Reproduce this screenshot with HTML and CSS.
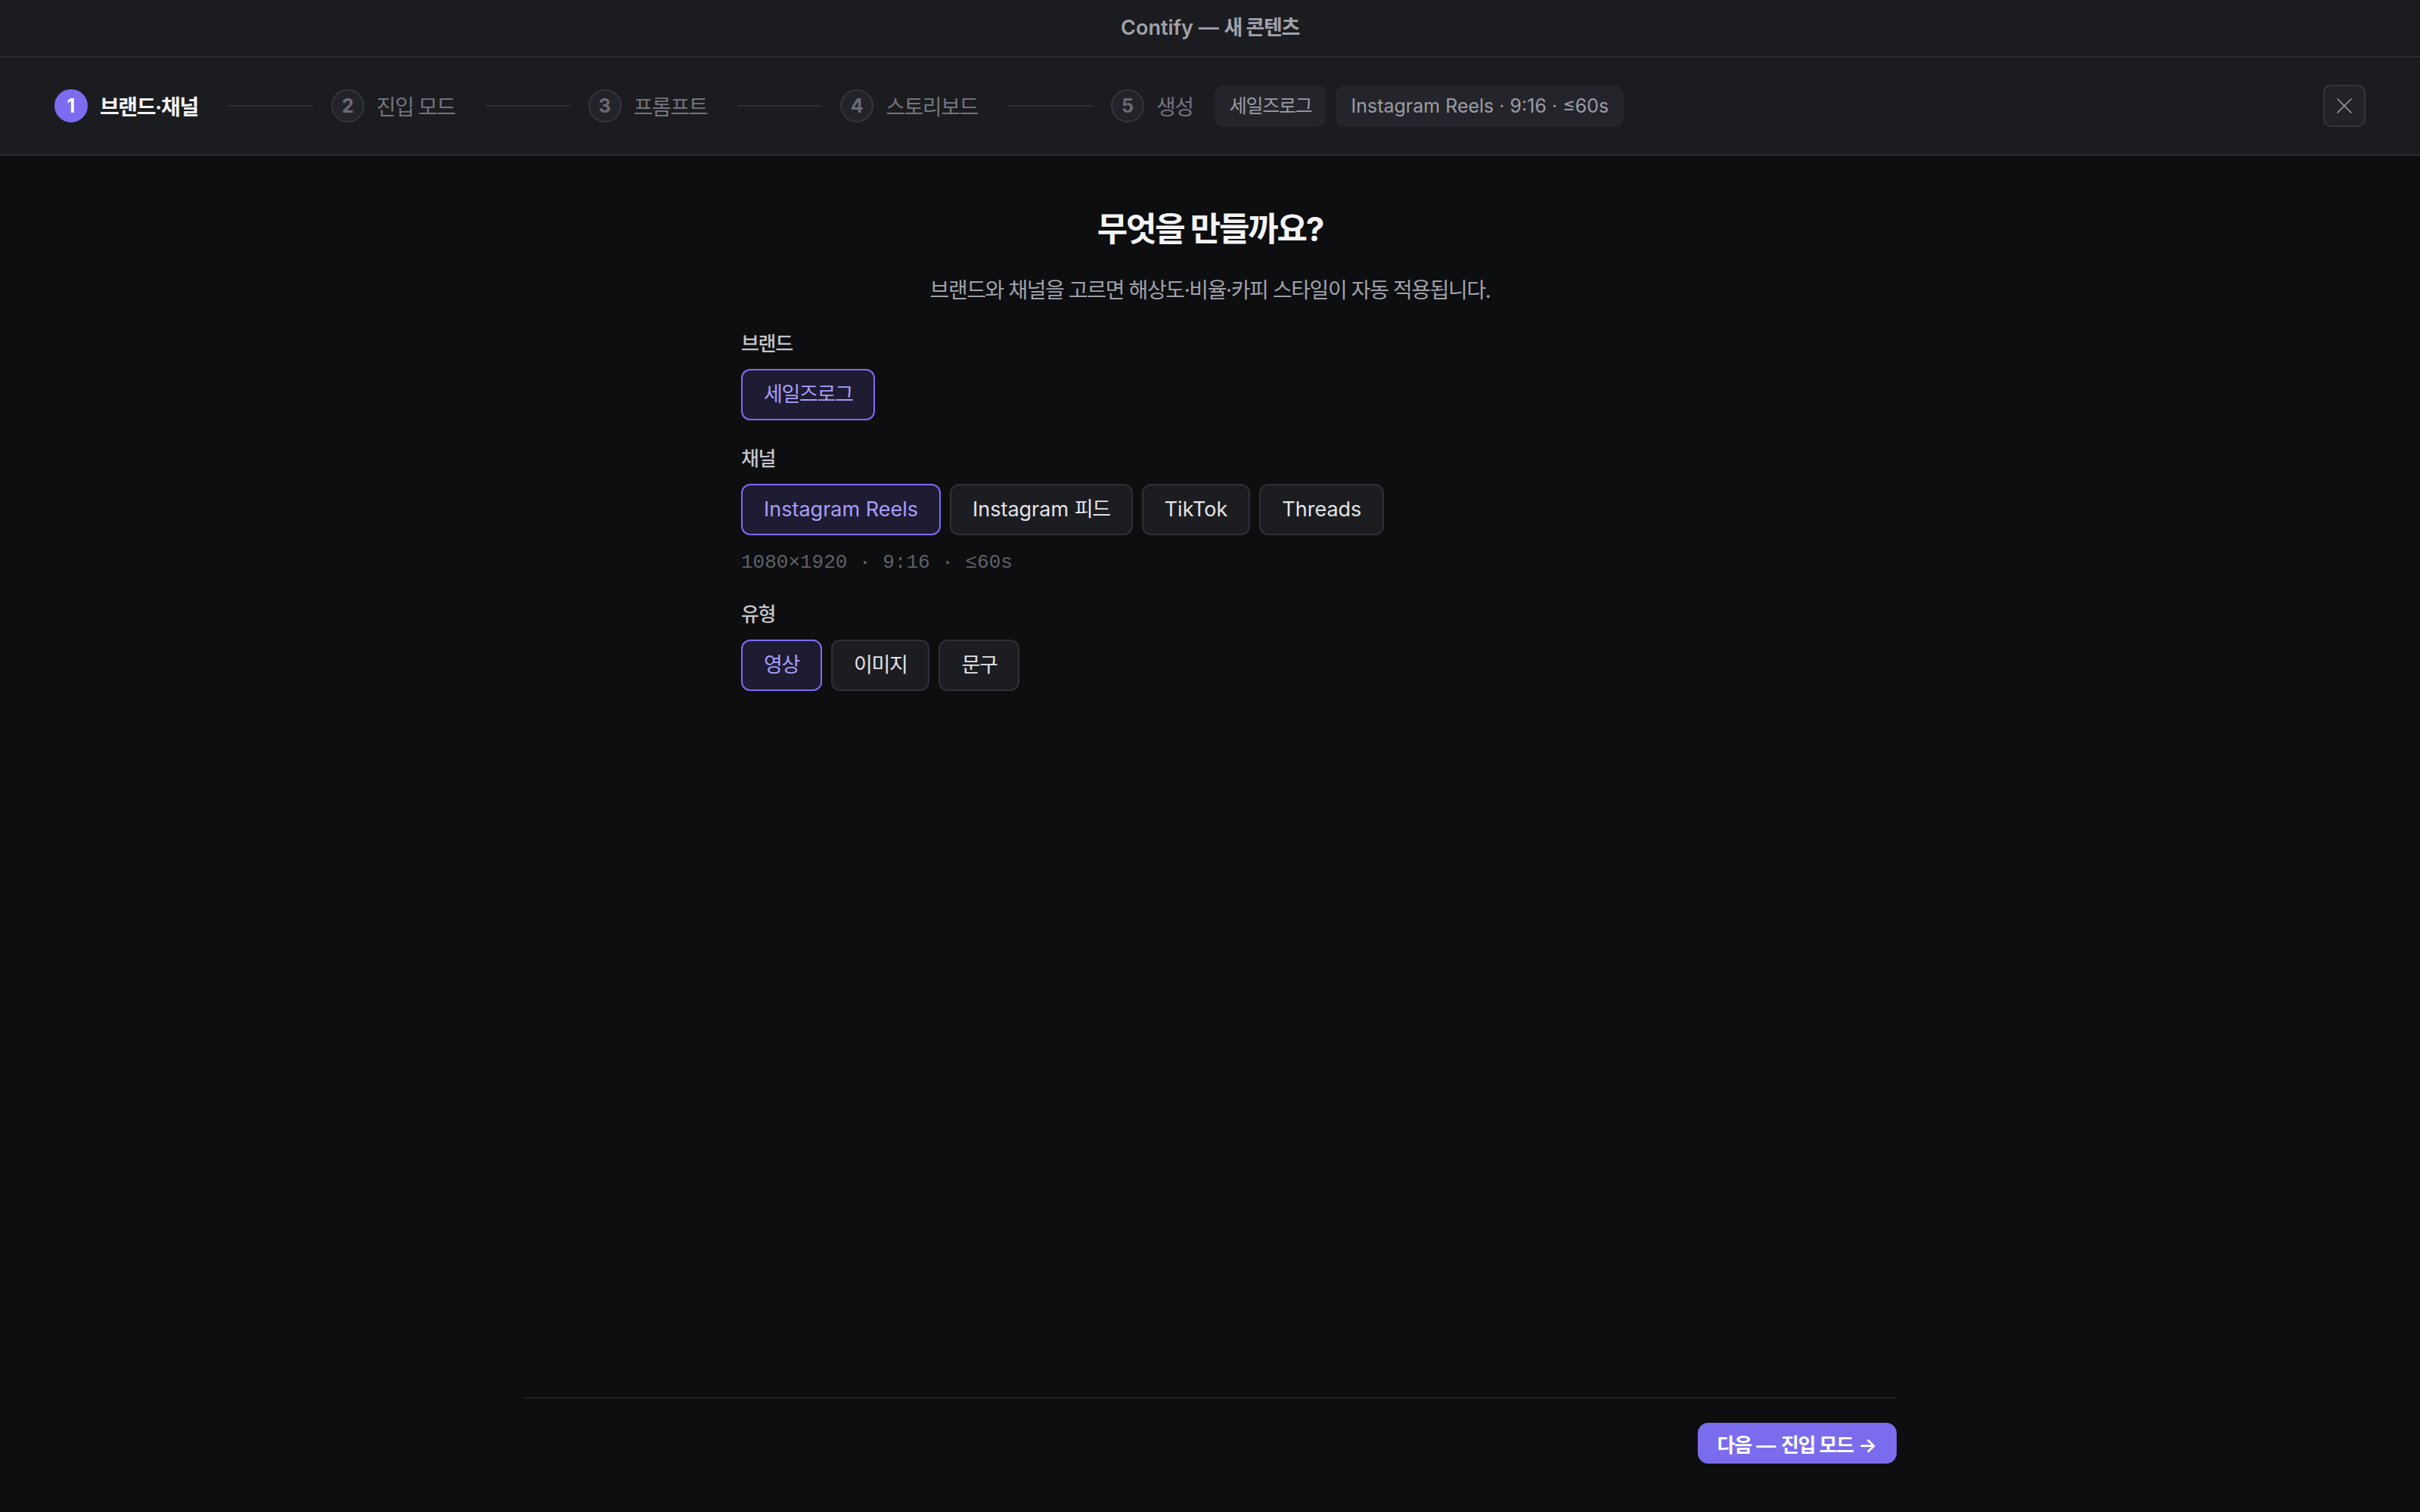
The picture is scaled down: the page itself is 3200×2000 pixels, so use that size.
FILE: index.html
```html
<!DOCTYPE html>
<html lang="ko">
<head>
    <meta charset="UTF-8">
    <meta name="viewport" content="width=device-width, initial-scale=1.0">
    <title>Contify — 새 콘텐츠</title>
    <link rel="stylesheet" href="styles.css">
</head>
<body>
    <!-- 타이틀 바 -->
    <div class="titlebar">Contify — <span class="ko">새 콘텐츠</span></div>

    <!-- 단계 표시 -->
    <div class="stepper">
        <div class="step active">
            <span class="step-num">1</span>
            <span class="step-label">브랜드·채널</span>
        </div>
        <span class="step-line"></span>
        <div class="step">
            <span class="step-num">2</span>
            <span class="step-label">진입 모드</span>
        </div>
        <span class="step-line"></span>
        <div class="step">
            <span class="step-num">3</span>
            <span class="step-label">프롬프트</span>
        </div>
        <span class="step-line"></span>
        <div class="step">
            <span class="step-num">4</span>
            <span class="step-label">스토리보드</span>
        </div>
        <span class="step-line"></span>
        <div class="step">
            <span class="step-num">5</span>
            <span class="step-label">생성</span>
        </div>

        <div class="step-meta">
            <span class="meta-chip ko">세일즈로그</span>
            <span class="meta-chip">Instagram Reels · 9:16 · ≤60s</span>
        </div>

        <button class="close-btn" aria-label="닫기">
            <svg width="24" height="24" viewBox="0 0 24 24" fill="none" stroke="currentColor" stroke-width="1.5" stroke-linecap="round">
                <path d="M3 3 L21 21 M21 3 L3 21"/>
            </svg>
        </button>
    </div>

    <!-- 본문 -->
    <main class="content">
        <h1 class="ko">무엇을 만들까요?</h1>
        <p class="subtitle ko">브랜드와 채널을 고르면 해상도·비율·카피 스타일이 자동 적용됩니다.</p>

        <div class="field">
            <div class="field-label ko">브랜드</div>
            <div class="chips">
                <button class="chip selected ko">세일즈로그</button>
            </div>
        </div>

        <div class="field">
            <div class="field-label ko">채널</div>
            <div class="chips">
                <button class="chip selected">Instagram Reels</button>
                <button class="chip">Instagram <span class="ko">피드</span></button>
                <button class="chip">TikTok</button>
                <button class="chip">Threads</button>
            </div>
            <div class="spec">1080×1920 · 9:16 · ≤60s</div>
        </div>

        <div class="field">
            <div class="field-label ko">유형</div>
            <div class="chips">
                <button class="chip selected ko">영상</button>
                <button class="chip ko">이미지</button>
                <button class="chip ko">문구</button>
            </div>
        </div>
    </main>

    <!-- 하단 -->
    <div class="footer">
        <button class="next-btn"><span class="ko">다음</span> — <span class="ko">진입 모드</span> →</button>
    </div>
</body>
</html>
```

FILE: styles.css
```css
body {
    font-family: Inter, "Noto Sans CJK KR", sans-serif;
    margin: 0;
    padding: 0;
    background-color: #0d0e10;
    color: #e4e4e7;
    min-height: 100vh;
    display: flex;
    flex-direction: column;
}

button {
    font-family: inherit;
    cursor: pointer;
}

/* 한글은 자간을 조금 좁게 */
.ko {
    letter-spacing: -0.05em;
}

.titlebar {
    height: 74px;
    line-height: 74px;
    text-align: center;
    background: #1b1c20;
    border-bottom: 2px solid #2a2b30;
    color: #a1a1aa;
    font-size: 27px;
    font-weight: 600;
}

/* 단계 표시 */
.stepper {
    height: 128px;
    padding: 0 72px;
    display: flex;
    align-items: center;
    background: #1b1c20;
    border-bottom: 2px solid #2a2b30;
}

.step {
    display: flex;
    align-items: center;
    gap: 16px;
}

.step-num {
    width: 40px;
    height: 40px;
    border-radius: 50%;
    border: 2px solid #35363d;
    background: #232429;
    color: #6b6c75;
    font-size: 25px;
    font-weight: 700;
    display: flex;
    align-items: center;
    justify-content: center;
}

.step-label {
    font-size: 28px;
    color: #73747c;
    letter-spacing: -0.05em;
}

.step.active .step-num {
    background: #7b6cf0;
    border-color: #7b6cf0;
    color: #fff;
}

.step.active .step-label {
    color: #f4f4f5;
    font-weight: 700;
}

.step-line {
    width: 112px;
    height: 2px;
    background: #2e2f35;
    margin: 0 24px 0 40px;
}

.step-meta {
    display: flex;
    gap: 12px;
    margin-left: 28px;
}

.meta-chip {
    padding: 10px 20px;
    line-height: 35px;
    font-size: 25px;
    color: #9b9ca4;
    background: #24252a;
    border-radius: 12px;
}

.close-btn {
    margin-left: auto;
    width: 56px;
    height: 56px;
    padding: 0;
    border: 2px solid #34353b;
    background: #222328;
    border-radius: 10px;
    color: #a1a2aa;
    display: flex;
    align-items: center;
    justify-content: center;
}

/* 본문 */
.content {
    flex: 1;
    width: 1240px;
    margin: 0 auto;
    padding-top: 68px;
}

h1 {
    margin: 0;
    font-size: 44px;
    line-height: 58px;
    font-weight: 700;
    text-align: center;
    color: #f4f4f5;
}

.subtitle {
    margin: 32px 0 0;
    font-size: 28px;
    line-height: 40px;
    text-align: center;
    color: #a1a1aa;
}

.field {
    margin-top: 33px;
}

.field-label {
    font-size: 26px;
    line-height: 36px;
    font-weight: 500;
    color: #c4c4ca;
    margin-bottom: 15px;
}

.chips {
    display: flex;
    gap: 12px;
}

.chip {
    padding: 14px 28px;
    font-size: 27px;
    line-height: 36px;
    color: #e4e4e7;
    background: #1c1d21;
    border: 2px solid #2f3036;
    border-radius: 12px;
}

.chip.selected {
    background: #1e1c33;
    border-color: #7b6ef0;
    color: #a99df7;
}

.spec {
    margin-top: 18px;
    font-family: "Liberation Mono", monospace;
    font-size: 26px;
    line-height: 36px;
    color: #60616a;
}

/* 하단 */
.footer {
    width: 1816px;
    margin: 0 auto;
    border-top: 2px solid #1f2024;
    padding: 32px 0 64px;
    display: flex;
    justify-content: flex-end;
}

.next-btn {
    height: 54px;
    padding: 0 26px;
    border: none;
    border-radius: 14px;
    background: #7a6cec;
    color: #fff;
    font-size: 26px;
    font-weight: 600;
}
```
